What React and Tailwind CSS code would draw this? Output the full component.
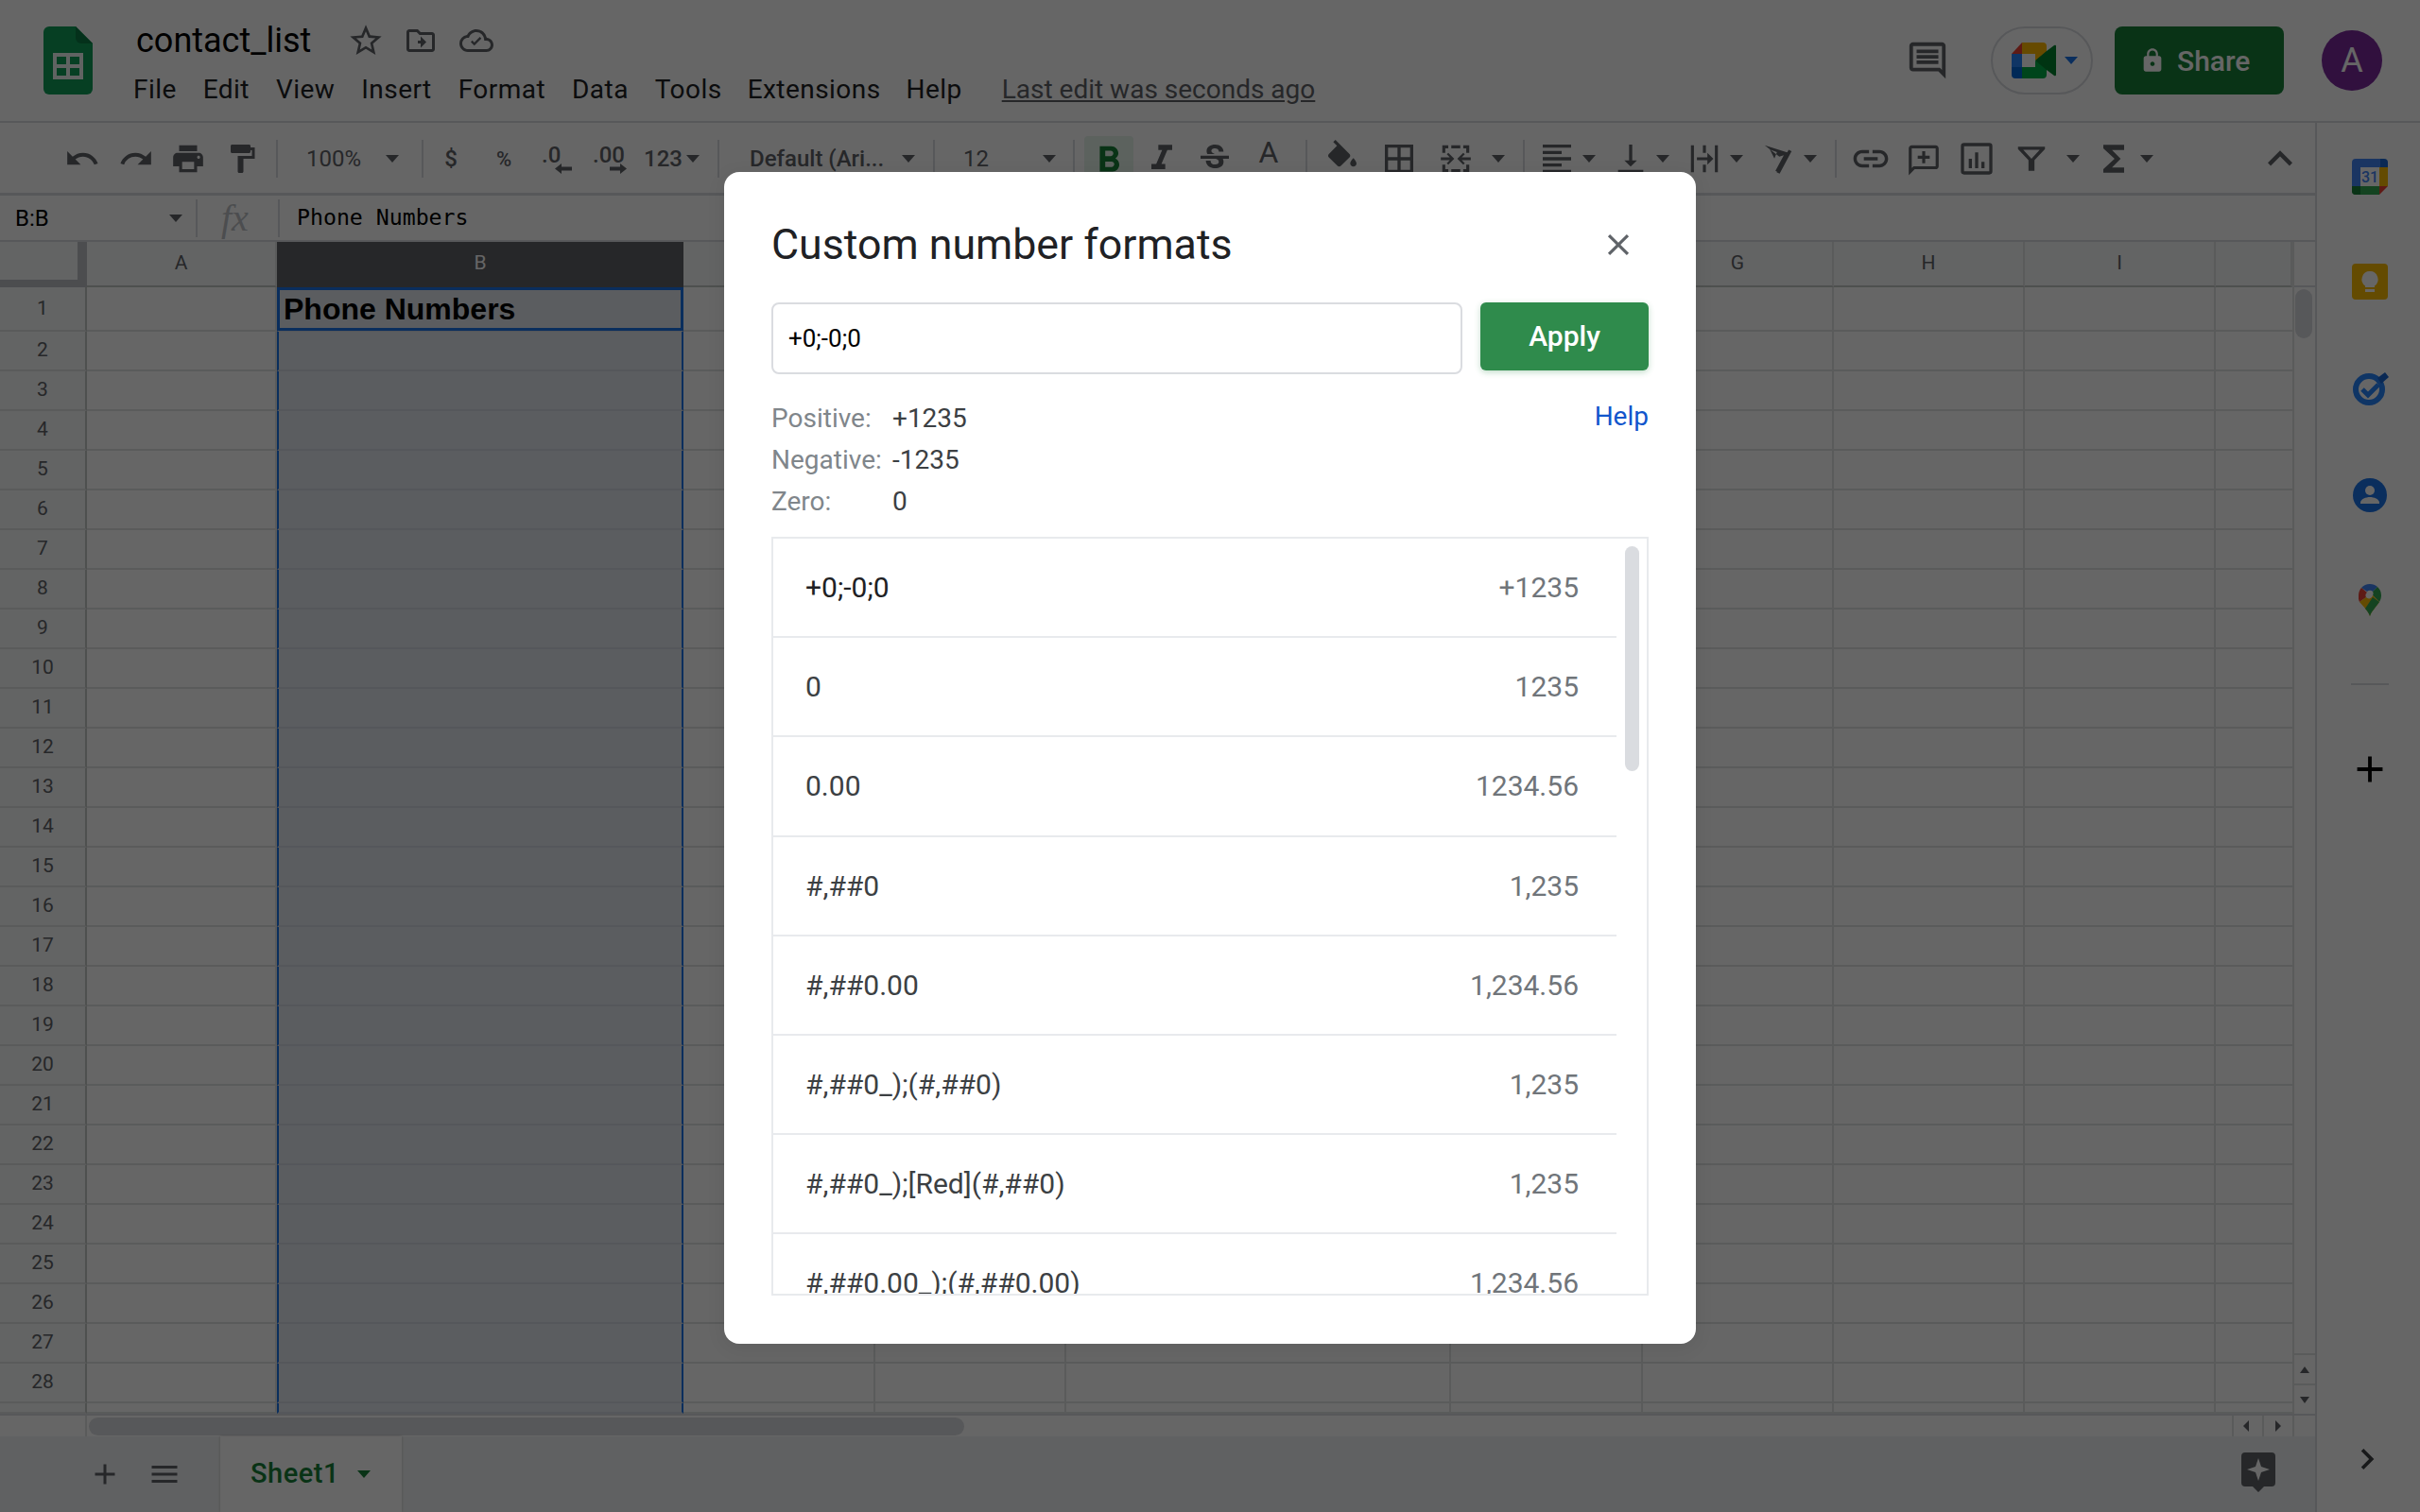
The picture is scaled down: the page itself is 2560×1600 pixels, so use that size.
import React from "react";
import {
  MdUndo, MdRedo, MdPrint, MdFormatPaint, MdFormatBold, MdFormatItalic, MdStrikethroughS,
  MdBorderAll, MdFormatAlignLeft, MdVerticalAlignBottom, MdLink,
  MdExpandLess, MdChevronRight, MdAdd, MdMenu, MdClose, MdStarBorder, MdLock, MdFunctions,
} from "react-icons/md";

const Caret = ({ className = "" }) => (
  <div className={`w-0 h-0 border-l-[7px] border-r-[7px] border-t-[8px] border-l-transparent border-r-transparent border-t-[#5f6368] ${className}`} />
);
const Sep = ({ className = "" }) => <div className={`w-[2px] h-[40px] bg-[#dadce0] ${className}`} />;
const I = ({ children, className = "" }) => (
  <div className={`w-[30px] h-[36px] flex items-center justify-center text-[#5f6368] ${className}`}>{children}</div>
);
const S24 = ({ children, size = 32 }) => (
  <svg width={size} height={size} viewBox="0 0 24 24" fill="currentColor" className="shrink-0">{children}</svg>
);

const cols = [
  ["A", "w-[201px]"], ["B", "w-[430px]"], ["C", "w-[203px]"], ["D", "w-[202px]"], ["E", "w-[407px]"],
  ["F", "w-[203px]"], ["G", "w-[202px]"], ["H", "w-[202px]"], ["I", "w-[202px]"], ["", "w-[81px]"],
];
const rows = Array.from({ length: 28 }, (_, i) => i + 1);

const Row = ({ n, h }) => (
  <div className={`flex shrink-0 ${h}`}>
    <div className="w-[92px] shrink-0 flex items-center justify-center bg-[#f8f9fa] border-r-2 border-b-2 border-[#c4c7c5] border-b-[#e2e3e3] text-[21px] text-[#5f6368]">
      {n}
    </div>
    {cols.map(([c, w]) => (
      <div
        key={c}
        className={`${w} shrink-0 border-b-2 border-[#e2e3e3] ${
          c === "B" ? "bg-[#e3e8f0] border-l-2 border-r-2 border-l-[#1a73e8] border-r-[#1a73e8] border-b-[#d5dae3]" : c === "" ? "" : "border-r-2 border-r-[#e2e3e3]"
        }`}
      >
        {c === "B" && n === 1 ? (
          <div className="h-[46px] -ml-[2px] -mr-[2px] border-[3px] border-[#1a73e8] flex items-center pl-[4px] text-[32px] font-bold text-black leading-none font-['Liberation_Sans',sans-serif]">
            Phone Numbers
          </div>
        ) : null}
      </div>
    ))}
  </div>
);

const formats = [
  ["+0;-0;0", "+1235", true],
  ["0", "1235"],
  ["0.00", "1234.56"],
  ["#,##0", "1,235"],
  ["#,##0.00", "1,234.56"],
  ["#,##0_);(#,##0)", "1,235"],
  ["#,##0_);[Red](#,##0)", "1,235"],
  ["#,##0.00_);(#,##0.00)", "1,234.56"],
];

function Logo() {
  return (
    <svg width="52" height="72" viewBox="0 0 52 72">
      <path d="M6 0h28l18 18v48a6 6 0 0 1-6 6H6a6 6 0 0 1-6-6V6a6 6 0 0 1 6-6z" fill="#0f9d58" />
      <path d="M34 0v12a6 6 0 0 0 6 6h12z" fill="#0b7a44" />
      <path d="M10 28h32v28H10z M14 32v8h10v-8z M28 32v8h10v-8z M14 44v8h10v-8z M28 44v8h10v-8z" fill="#f1f8f4" fillRule="evenodd" />
    </svg>
  );
}

function Meet() {
  return (
    <svg width="47" height="38" viewBox="0 0 47 38" className="shrink-0">
      <path d="M0 12L11 0v12z" fill="#ea4335" />
      <path d="M11 0h22a4 4 0 0 1 4 4v8l-12 7v-7H11z" fill="#ffba00" />
      <path d="M0 12h11v14H0z" fill="#2684fc" />
      <path d="M0 26h11v12H4a4 4 0 0 1-4-4z" fill="#0066da" />
      <path d="M11 26h14v-7l12 7v8a4 4 0 0 1-4 4H11z" fill="#00ac47" />
      <path d="M25 19L37 9l8-6a1.200 1.200 0 0 1 2 1v30a1.200 1.200 0 0 1-2 1l-8-6z" fill="#00832d" />
    </svg>
  );
}

function Calendar() {
  return (
    <svg width="38" height="38" viewBox="0 0 38 38">
      <path d="M4 0h26v9H9v20H0V4a4 4 0 0 1 4-4z" fill="#4285f4" />
      <path d="M30 0h4a4 4 0 0 1 4 4v5h-8z" fill="#1967d2" />
      <path d="M29 9h9v20h-9z" fill="#fbbc04" />
      <path d="M0 29h29v9H4a4 4 0 0 1-4-4z" fill="#34a853" />
      <path d="M0 29h9v9H4a4 4 0 0 1-4-4z" fill="#188038" />
      <path d="M29 29h9l-9 9z" fill="#ea4335" />
      <path d="M9 9h20v20H9z" fill="#fff" />
      <text x="19" y="25" textAnchor="middle" fontSize="16" fontWeight="500" fill="#4285f4" fontFamily="Roboto, sans-serif">31</text>
    </svg>
  );
}
function Keep() {
  return (
    <svg width="38" height="38" viewBox="0 0 38 38">
      <rect width="38" height="38" rx="4" fill="#fbbc04" />
      <path d="M19 8a8.500 8.500 0 0 0-5 15.400V25h10v-1.600A8.500 8.500 0 0 0 19 8z" fill="#fff" />
      <rect x="14" y="27" width="10" height="3" fill="#fff" />
    </svg>
  );
}
function Tasks() {
  return (
    <svg width="38" height="36" viewBox="0 0 38 36">
      <circle cx="17" cy="19" r="14" fill="none" stroke="#2684fc" strokeWidth="6" />
      <path d="M10 19l6 6 11-11" fill="none" stroke="#2684fc" strokeWidth="5" />
      <path d="M26 7l8-6 4 5-8 7z" fill="#1967d2" />
    </svg>
  );
}
function Contact() {
  return (
    <svg width="36" height="36" viewBox="0 0 36 36">
      <circle cx="18" cy="18" r="18" fill="#1a73e8" />
      <circle cx="18" cy="13" r="5" fill="#fff" />
      <path d="M8 26c0-4 6-6 10-6s10 2 10 6v1H8z" fill="#fff" />
    </svg>
  );
}
function Maps() {
  return (
    <svg width="24" height="34" viewBox="0 0 24 34">
      <path d="M3 4a12 12 0 0 1 9-4c3 0 6 1 8 3l-5 5a4 4 0 0 0-6 0z" fill="#4285f4" />
      <path d="M3 4L9 9a4 4 0 0 0-1 5L1 19a12 12 0 0 1-1-7c0-3 1-6 3-8z" fill="#ea4335" />
      <path d="M20 3a12 12 0 0 1 4 9c0 3-1 5-2 7l-7-7a4 4 0 0 0 0-4z" fill="#34a853" />
      <path d="M8 14a4 4 0 0 0 7-2l7 7c-3 5-8 9-10 15-2-6-7-10-11-15z" fill="#fbbc04" />
      <path d="M22 19c-3 5-8 9-10 15-1-3-3-6-5-8L15 14z" fill="#34a853" />
    </svg>
  );
}

export default function App() {
  return (
    <div className="relative w-[2560px] h-[1600px] overflow-hidden bg-white font-['Roboto',sans-serif] text-[#202124]">
      {/* Header */}
      <div className="h-[130px] flex border-b-2 border-[#dadce0]">
        <div className="pl-[46px] pt-[28px]"><Logo /></div>
        <div className="pl-[45px]">
          <div className="h-[44px] mt-[21px] flex items-center">
            <span className="ml-[1px] text-[36px] text-black leading-none">contact_list</span>
            <span className="ml-[38px] text-[#5f6368]"><MdStarBorder size={40} /></span>
            <span className="ml-[20px] text-[#5f6368]">
              <S24 size={36}><path d="M20 6h-8l-2-2H4c-1.100 0-2 .9-2 2v12c0 1.100.9 2 2 2h16c1.100 0 2-.9 2-2V8c0-1.100-.9-2-2-2zm0 12H4V6h5.170l2 2H20v10zm-8-4h-2v-2h2V9l4 4-4 4v-3z" /></S24>
            </span>
            <span className="ml-[23px] text-[#5f6368]">
              <S24 size={36}><path d="M19.350 10.040A7.490 7.490 0 0 0 12 4C9.110 4 6.600 5.640 5.350 8.040A5.994 5.994 0 0 0 0 14c0 3.310 2.690 6 6 6h13c2.760 0 5-2.240 5-5 0-2.640-2.050-4.780-4.650-4.960zM19 18H6c-2.210 0-4-1.790-4-4s1.790-4 4-4h.71C7.370 7.690 9.480 6 12 6a5.500 5.500 0 0 1 5.500 5.500v.5H19c1.660 0 3 1.340 3 3s-1.340 3-3 3zm-8.500-2.500L8 13l1.100-1.100 1.400 1.400 3.900-3.900 1.100 1.100z" /></S24>
            </span>
          </div>
          <div className="flex items-center text-[28px] leading-none mt-[16px] tracking-[0.45px] text-[#202124] -ml-[2px]">
            <span>File</span>
            <span className="ml-[28px]">Edit</span>
            <span className="ml-[28px]">View</span>
            <span className="ml-[28px]">Insert</span>
            <span className="ml-[28px]">Format</span>
            <span className="ml-[28px]">Data</span>
            <span className="ml-[28px]">Tools</span>
            <span className="ml-[27px]">Extensions</span>
            <span className="ml-[27px]">Help</span>
            <span className="ml-[42px] underline text-[#5f6368] tracking-[0px]">Last edit was seconds ago</span>
          </div>
        </div>
        <div className="ml-auto flex items-start pt-[28px] pr-[40px]">
          <div className="mt-[13px] mr-[44px] text-[#5f6368]">
            <S24 size={46}><path d="M21.990 4c0-1.100-.89-2-1.990-2H4c-1.100 0-2 .9-2 2v12c0 1.100.9 2 2 2h14l4 4-.01-18zM20 4v13.170L18.830 16H4V4h16zM6 12h12v2H6zm0-3h12v2H6zm0-3h12v2H6z" /></S24>
          </div>
          <div className="w-[108px] h-[72px] rounded-full border-2 border-[#dadce0] flex items-center pl-[20px]">
            <Meet />
            <Caret className="ml-[9px] !border-t-[#1a73e8]" />
          </div>
          <div className="w-[179px] h-[72px] ml-[23px] rounded-[8px] bg-[#188038] flex items-center text-white pl-[26px]">
            <MdLock size={28} />
            <span className="ml-[12px] text-[30px] font-medium">Share</span>
          </div>
          <div className="w-[64px] h-[64px] ml-[40px] mt-[4px] rounded-full bg-[#7b2a9c] flex items-center justify-center text-white text-[36px]">A</div>
        </div>
      </div>

      <div className="flex h-[1470px]">
        <div className="w-[2449px] flex flex-col">
          {/* Toolbar */}
          <div className="h-[77px] pt-[2px] flex items-center border-b-[3px] border-[#dadce0] shrink-0 text-[#5f6368] text-[24px]">
            <I className="ml-[72px]"><MdUndo size={38} className="shrink-0" /></I>
            <I className="ml-[27px]"><MdRedo size={38} className="shrink-0" /></I>
            <I className="ml-[25px]"><MdPrint size={38} className="shrink-0" /></I>
            <I className="ml-[27px]"><MdFormatPaint size={36} className="shrink-0" /></I>
            <Sep className="ml-[21px]" />
            <span className="ml-[30px] w-[59px]">100%</span>
            <Caret className="ml-[25px]" />
            <Sep className="ml-[24px]" />
            <span className="ml-[19px] w-[20px] text-center font-medium">$</span>
            <span className="ml-[34px] w-[24px] text-center font-medium text-[22px]">%</span>
            <div className="ml-[28px] w-[32px] relative font-medium -mt-[8px]">.0
              <svg className="absolute left-[14px] top-[27px]" width="18" height="11" viewBox="0 0 18 11" fill="currentColor"><path d="M0 5.500L7 0v3.500h11v4H7V11z" /></svg>
            </div>
            <div className="ml-[22px] w-[36px] relative font-medium -mt-[8px]">.00
              <svg className="absolute left-[18px] top-[27px]" width="18" height="11" viewBox="0 0 18 11" fill="currentColor"><path d="M18 5.500L11 0v3.500H0v4h11V11z" /></svg>
            </div>
            <span className="ml-[18px] w-[38px] font-medium">123</span>
            <Caret className="ml-[7px]" />
            <Sep className="ml-[19px]" />
            <span className="ml-[32px] w-[138px] whitespace-nowrap font-medium">Default (Ari...</span>
            <Caret className="ml-[23px]" />
            <Sep className="ml-[19px]" />
            <span className="ml-[30px] w-[28px]">12</span>
            <Caret className="ml-[56px]" />
            <Sep className="ml-[18px]" />
            <div className="ml-[10px] w-[52px] h-[52px] mt-[4px] rounded-[4px] bg-[#e6f4ea] flex items-center justify-center text-[#188038]"><MdFormatBold size={46} className="shrink-0" /></div>
            <I className="ml-[15px]"><MdFormatItalic size={44} className="shrink-0" /></I>
            <I className="ml-[26px]"><MdStrikethroughS size={40} className="shrink-0" /></I>
            <div className="ml-[27px] w-[30px] text-center text-[32px] leading-none -mt-[14px]">A</div>
            <Sep className="ml-[24px]" />
            <I className="ml-[22px]">
              <S24 size={40}><path d="M16.560 8.940L7.620 0 6.210 1.410l2.380 2.380-5.150 5.150c-.59.59-.59 1.540 0 2.120l5.500 5.500c.29.29.68.44 1.060.44s.77-.15 1.060-.44l5.500-5.500c.59-.58.59-1.530 0-2.120zM19 11.500s-2 2.170-2 3.500c0 1.100.9 2 2 2s2-.9 2-2c0-1.330-2-3.500-2-3.500z" /></S24>
            </I>
            <I className="ml-[30px]"><MdBorderAll size={40} className="shrink-0" /></I>
            <I className="ml-[30px]">
              <S24 size={38}><path d="M3 3h4v2H5v3H3zm14 0h4v5h-2V5h-2zM3 16h2v3h2v2H3zm16 0h2v5h-4v-2h2zM9 3h6v2H9zm0 16h6v2H9zM2 11h6l-2-2 1-1 4 4-4 4-1-1 2-2H2zm20 0v2h-6l2 2-1 1-4-4 4-4 1 1-2 2z" /></S24>
            </I>
            <Caret className="ml-[23px]" />
            <Sep className="ml-[19px]" />
            <I className="ml-[19px]"><MdFormatAlignLeft size={40} className="shrink-0" /></I>
            <Caret className="ml-[12px]" />
            <I className="ml-[22px]"><MdVerticalAlignBottom size={40} className="shrink-0" /></I>
            <Caret className="ml-[12px]" />
            <I className="ml-[22px]">
              <S24 size={38}><path d="M3 3h2v18H3zm16 0h2v18h-2zM11 3h2v5h-2zm0 13h2v5h-2zM7 11h7V8l4 4-4 4v-3H7z" /></S24>
            </I>
            <Caret className="ml-[12px]" />
            <I className="ml-[22px]">
              <S24 size={38}><path d="M3 3l16 5-7 13-1.800-.9 5.600-10.500-3 .9zM6.500 5.800l3 6 1.700-4.300zM19 6l2 1-8 15-2-1z" /></S24>
            </I>
            <Caret className="ml-[12px]" />
            <Sep className="ml-[19px]" />
            <I className="ml-[21px]"><MdLink size={44} className="shrink-0" /></I>
            <I className="ml-[26px]">
              <S24 size={38}><path d="M20 3H4c-1.100 0-2 .9-2 2v18l4-4h14c1.100 0 2-.9 2-2V5c0-1.100-.9-2-2-2zm0 14H5.200L4 18.200V5h16zM11 7h2v3h3v2h-3v3h-2v-3H8v-2h3z" /></S24>
            </I>
            <I className="ml-[26px]">
              <S24 size={40}><path d="M4 2h16a2 2 0 0 1 2 2v16a2 2 0 0 1-2 2H4a2 2 0 0 1-2-2V4a2 2 0 0 1 2-2zm0 2v16h16V4zm3 8h2v6H7zm4-4h2v10h-2zm4 6h2v4h-2z" /></S24>
            </I>
            <I className="ml-[28px]">
              <S24 size={38}><path d="M3 4h18v1.500L14 13v7h-4v-7L3 5.500zm3.500 2L12 12l5.500-6z" /></S24>
            </I>
            <Caret className="ml-[22px]" />
            <I className="ml-[21px]"><MdFunctions size={44} className="shrink-0" /></I>
            <Caret className="ml-[13px]" />
            <I className="ml-[119px]"><MdExpandLess size={52} className="shrink-0" /></I>
          </div>

          {/* Formula bar */}
          <div className="h-[49px] flex items-center border-b-2 border-[#dadce0] shrink-0 bg-white">
            <span className="ml-[16px] w-[40px] text-[24px] text-black">B:B</span>
            <Caret className="ml-[123px]" />
            <Sep className="ml-[14px] h-[36px]" />
            <span className="ml-[25px] w-[37px] text-[40px] leading-none italic text-[#bdc1c6] font-['Liberation_Serif',serif]">fx</span>
            <Sep className="ml-[23px] h-[34px]" />
            <span className="ml-[18px] text-[23.200px] text-black font-['DejaVu_Sans_Mono',monospace]">Phone Numbers</span>
          </div>

          {/* Grid + vertical scrollbar */}
          <div className="flex flex-1 min-h-0">
            <div className="w-[2425px] flex flex-col overflow-hidden">
              <div className="flex h-[48px] shrink-0">
                <div className="w-[92px] h-full border-r-[10px] border-b-[8px] border-[#bdc1c6] bg-[#f8f9fa] shrink-0" />
                {cols.map(([c, w]) => (
                  <div
                    key={c}
                    className={`${w} shrink-0 flex items-center justify-center text-[21px] border-b-2 ${
                      c === "B" ? "bg-[#5f6368] text-white border-[#5f6368]" : "bg-[#f8f9fa] text-[#5f6368] border-[#c4c7c5] border-r-2 border-r-[#e2e3e3]"
                    }`}
                  >
                    {c}
                  </div>
                ))}
              </div>
              <Row n={1} h="h-[47px]" />
              {rows.slice(1).map((n) => <Row key={n} n={n} h="h-[42px]" />)}
              <Row n="" h="h-[11px]" />
            </div>
            <div className="w-[24px] border-l-2 border-[#e2e3e3] flex flex-col shrink-0">
              <div className="h-[48px] shrink-0 border-b-2 border-[#dadce0]" />
              <div className="mx-[1px] w-[18px] h-[52px] mt-[2px] rounded-full bg-[#dadce0] shrink-0" />
              <div className="flex-1" />
              <div className="h-[32px] border-t-2 border-[#e2e3e3] flex items-center justify-center">
                <div className="w-0 h-0 border-l-[5px] border-r-[5px] border-b-[7px] border-l-transparent border-r-transparent border-b-[#5f6368]" />
              </div>
              <div className="h-[32px] border-t-2 border-[#e2e3e3] flex items-center justify-center">
                <div className="w-0 h-0 border-l-[5px] border-r-[5px] border-t-[7px] border-l-transparent border-r-transparent border-t-[#5f6368]" />
              </div>
            </div>
          </div>

          {/* Horizontal scrollbar */}
          <div className="h-[24px] shrink-0 border-t-2 border-[#dadce0] flex items-center">
            <div className="w-[92px] h-full border-r-2 border-[#e2e3e3] shrink-0" />
            <div className="w-[926px] h-[19px] ml-[2px] rounded-full bg-[#dadce0]" />
            <div className="ml-auto flex h-full">
              <div className="w-[32px] border-l-2 border-[#e2e3e3] flex items-center justify-center pr-[4px]">
                <div className="w-0 h-0 border-t-[6px] border-b-[6px] border-r-[6px] border-t-transparent border-b-transparent border-r-[#5f6368]" />
              </div>
              <div className="w-[32px] border-l-2 border-[#e2e3e3] flex items-center justify-center">
                <div className="w-0 h-0 border-t-[6px] border-b-[6px] border-l-[6px] border-t-transparent border-b-transparent border-l-[#5f6368]" />
              </div>
              <div className="w-[24px] border-l-2 border-[#e2e3e3]" />
            </div>
          </div>

          {/* Tab bar */}
          <div className="h-[80px] shrink-0 bg-[#f1f3f4] flex items-center">
            <span className="ml-[93px] text-[#5f6368]"><MdAdd size={36} /></span>
            <span className="ml-[27px] text-[#5f6368]"><MdMenu size={36} /></span>
            <div className="ml-[41px] w-[192px] h-full bg-white shadow-[0_0_3px_rgba(0,0,0,0.2)] flex items-center pl-[32px] text-[#188038]">
              <span className="text-[29px] font-medium tracking-[0.5px]">Sheet1</span>
              <Caret className="ml-[19px] !border-t-[#188038]" />
            </div>
            <div className="ml-auto mr-[42px] -mt-[2px]">
              <svg width="36" height="44" viewBox="0 0 36 44">
                <path d="M4 0h28a4 4 0 0 1 4 4v28a4 4 0 0 1-4 4h-8l-6 6-6-6H4a4 4 0 0 1-4-4V4a4 4 0 0 1 4-4z" fill="#5f6368" />
                <path d="M18 6l3 9 9 3-9 3-3 9-3-9-9-3 9-3z" fill="#fff" />
              </svg>
            </div>
          </div>
        </div>

        {/* Side panel */}
        <div className="w-[111px] border-l-2 border-[#dadce0] flex flex-col items-center">
          <div className="mt-[38px] ml-[2px]"><Calendar /></div>
          <div className="mt-[73px] ml-[2px]"><Keep /></div>
          <div className="mt-[76px] ml-[4px]"><Tasks /></div>
          <div className="mt-[77px] ml-[2px]"><Contact /></div>
          <div className="mt-[76px] ml-[2px]"><Maps /></div>
          <div className="mt-[71px] ml-[2px] w-[40px] h-[2px] bg-[#dadce0]" />
          <div className="mt-[66px] ml-[2px] text-black"><MdAdd size={46} /></div>
          <div className="mt-auto mb-[34px] -ml-[3px] text-[#3c4043]"><MdChevronRight size={44} /></div>
        </div>
      </div>

      {/* Overlay */}
      <div className="absolute inset-0 bg-black/60" />

      {/* Dialog */}
      <div className="absolute left-[766px] top-[182px] w-[1028px] h-[1240px] bg-white rounded-[16px] px-[50px] pt-[49px] shadow-[0_4px_20px_rgba(0,0,0,0.08)]">
        <div className="h-[56px] flex items-center justify-between">
          <span className="text-[44.700px] leading-none text-[#202124] mt-[1px]">Custom number formats</span>
          <span className="mr-[13px] text-[#5f6368]"><MdClose size={38} /></span>
        </div>
        <div className="flex mt-[33px]">
          <div className="w-[731px] h-[76px] border-2 border-[#dadce0] rounded-[8px] flex items-center pl-[16px] text-[26px] text-black">+0;-0;0</div>
          <div className="ml-[19px] w-[178px] h-[72px] pb-[1px] rounded-[6px] bg-[#2f8b4c] shadow-[0_2px_6px_rgba(47,139,76,0.3)] flex items-center justify-center text-white text-[30px] font-medium">Apply</div>
        </div>
        <div className="flex justify-between mt-[25px] text-[28px] leading-[44px]">
          <div>
            <div className="flex"><span className="w-[128px] text-[#80868b]">Positive:</span><span className="text-[#3c4043]">+1235</span></div>
            <div className="flex"><span className="w-[128px] text-[#80868b]">Negative:</span><span className="text-[#3c4043]">-1235</span></div>
            <div className="flex"><span className="w-[128px] text-[#80868b]">Zero:</span><span className="text-[#3c4043]">0</span></div>
          </div>
          <a className="text-[#1155cc] -mt-[2px]">Help</a>
        </div>
        <div className="relative mt-[15px] h-[803px] border-2 border-[#e8eaed] overflow-hidden">
          {formats.map(([a, b, first]) => (
            <div key={a} className="w-[892px] h-[105.200px] border-b-2 border-[#e8eaed] flex items-center justify-between pl-[34px] pr-[40px] text-[30px]">
              <span className={first ? "text-[#202124]" : "text-[#3c4043]"}>{a}</span>
              <span className="text-[#70757a]">{b}</span>
            </div>
          ))}
          <div className="absolute left-[901px] top-[8px] w-[15px] h-[238px] rounded-full bg-[#dadce0]" />
        </div>
      </div>
    </div>
  );
}
